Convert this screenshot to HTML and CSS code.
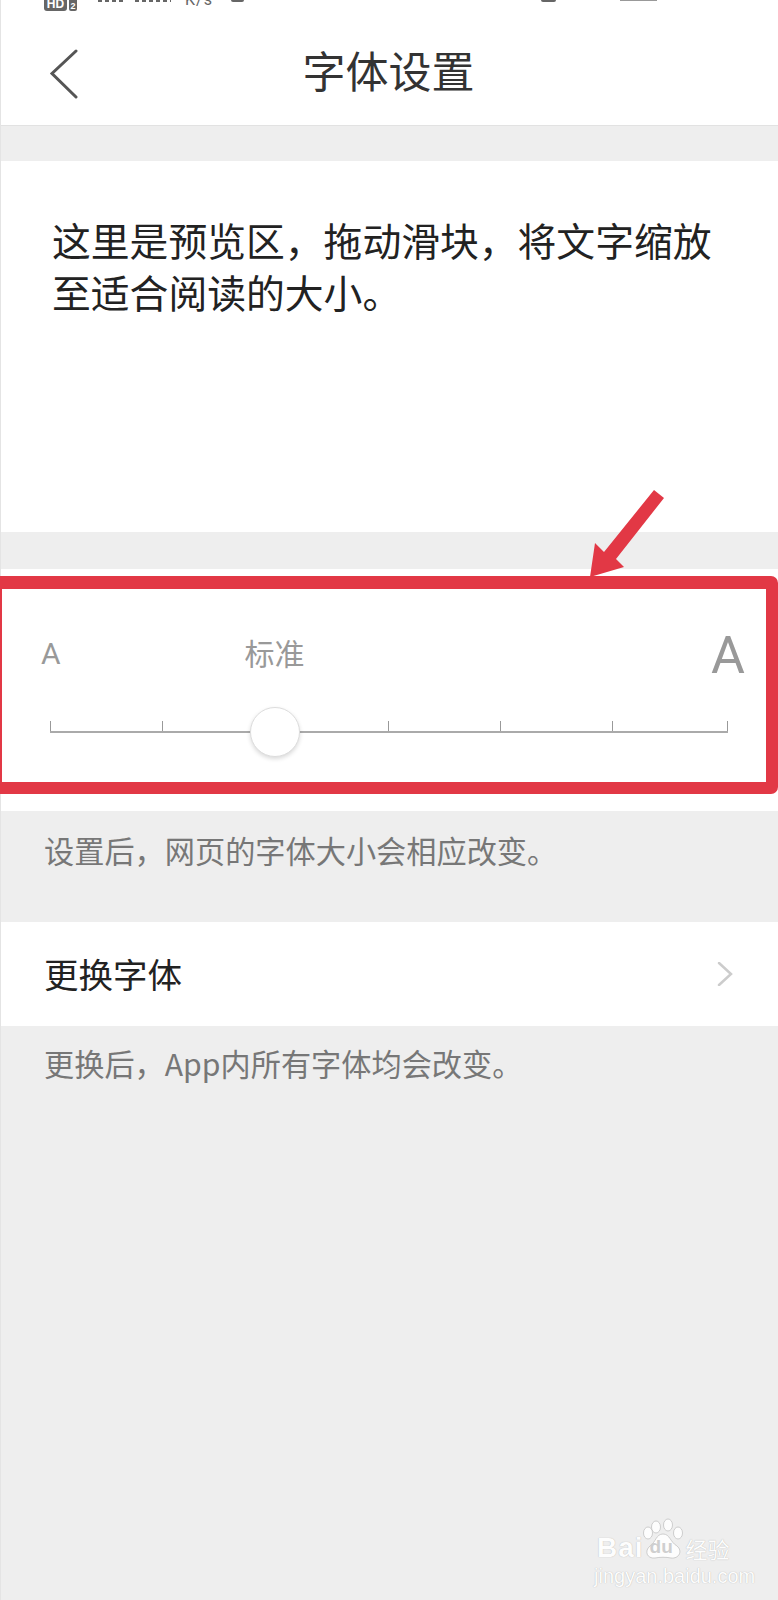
FILE: index.html
```html
<!DOCTYPE html>
<html lang="zh-CN">
<head>
<meta charset="utf-8">
<title>字体设置</title>
<link rel="stylesheet" href="styles.css">
</head>
<body>
<div class="page">
  <header class="top">
    <div class="status">
      <span class="hd">HD</span>
      <span class="sim">2</span>
      <span class="dots dots-a"></span>
      <span class="dots dots-b"></span>
      <span class="speed">K/s</span>
      <span class="cap cap-a"></span>
      <span class="cap cap-b"></span>
      <span class="batt"></span>
    </div>
    <div class="nav">
      <svg class="back" viewBox="0 0 30 50" width="30" height="50"><path d="M27 2 L3 24.5 L27 48"/></svg>
      <h1 class="title">字体设置</h1>
    </div>
  </header>

  <section class="preview">
    <p class="preview-text">这里是预览区，拖动滑块，将文字缩放至适合阅读的大小。</p>
  </section>

  <section class="slider">
    <div class="labels">
      <span class="a-small">A</span>
      <span class="std">标准</span>
      <span class="a-large">A</span>
    </div>
    <div class="track">
      <i class="seg"></i><i class="seg"></i><i class="seg"></i><i class="seg"></i><i class="seg"></i><i class="seg last"></i>
      <span class="thumb"></span>
    </div>
  </section>

  <p class="note note-first">设置后，网页的字体大小会相应改变。</p>

  <div class="row">
    <span class="row-label">更换字体</span>
    <svg class="chev" viewBox="0 0 16 24" width="16" height="24"><path d="M2 1 L14 12 L2 23"/></svg>
  </div>

  <p class="note note-second">更换后，App内所有字体均会改变。</p>

  <div class="mark-box"></div>
  <svg class="mark-arrow" viewBox="0 0 90 100" width="90" height="100"><polygon points="70,2 80,10 32,71 40,79 6,89 11,55 20,64"/></svg>

  <div class="wm">
    <div class="wm-line">
      <span class="wm-bai">Bai</span>
      <span class="wm-paw">
        <svg viewBox="0 0 44 42" width="44" height="42">
          <ellipse cx="14" cy="9" rx="4.5" ry="6"/>
          <ellipse cx="26" cy="7" rx="4.5" ry="6"/>
          <ellipse cx="36" cy="15" rx="4.5" ry="6"/>
          <ellipse cx="6" cy="15" rx="4.5" ry="6"/>
          <path d="M21 16 C28 16 28 24 35 28 C41 33 37 41 29 40 C24 39 18 39 13 40 C5 41 2 33 8 28 C14 24 14 16 21 16 Z"/>
        </svg>
        <span class="wm-du">du</span>
      </span>
      <span class="wm-jy">经验</span>
    </div>
    <div class="wm-url">jingyan.baidu.com</div>
  </div>
</div>
</body>
</html>
```
FILE: styles.css
```css
* { box-sizing: border-box; }
html, body { margin: 0; padding: 0; }
html { overflow: hidden; }
body {
  font-family: "Noto Sans CJK SC", "Noto Sans", sans-serif;
  background: #eeeeee;
}
.page {
  position: relative;
  width: 778px;
  height: 1600px;
  background: #eeeeee;
  border-left: 1px solid #e4e4e4;
}

/* header */
.top {
  height: 126px;
  background: #fff;
  border-bottom: 1px solid #e2e2e2;
}
.status {
  height: 12px;
  overflow: hidden;
  display: flex;
  align-items: flex-start;
  color: #666;
}
.hd {
  width: 23px;
  height: 11px;
  margin-left: 43px;
  background: #666;
  border-radius: 0 0 3px 3px;
  color: #fff;
  font: 700 12px/8px "Liberation Sans", sans-serif;
  text-align: center;
}
.sim {
  width: 8px;
  height: 11px;
  margin-left: 2px;
  background: #666;
  border-radius: 0 0 2px 2px;
  color: #fff;
  font: 700 9px/12px "Liberation Sans", sans-serif;
  text-align: center;
}
.dots {
  height: 2px;
  background: repeating-linear-gradient(90deg, #666 0 4px, transparent 4px 7px);
}
.dots-a { width: 26px; margin-left: 21px; }
.dots-b { width: 36px; margin-left: 11px; }
.speed {
  margin-left: 14px;
  margin-top: -8px;
  font: 400 16px/16px "Roboto", sans-serif;
  letter-spacing: 1px;
}
.cap {
  width: 13px;
  height: 2px;
  background: #666;
  border-radius: 0 0 7px 7px;
}
.cap-a { margin-left: 18px; }
.cap-b { margin-left: 297px; width: 15px; }
.batt {
  width: 37px;
  height: 1px;
  margin-left: 64px;
  background: #999;
}
.nav {
  position: relative;
  height: 113px;
  display: flex;
  align-items: center;
  justify-content: center;
}
.back {
  position: absolute;
  left: 48px;
  top: 37px;
  fill: none;
  stroke: #555;
  stroke-width: 3;
  stroke-linecap: round;
}
.title {
  margin: 0 0 0 -2px;
  font-size: 43px;
  line-height: 60px;
  font-weight: 400;
  color: #333;
}

/* preview */
.preview {
  margin-top: 35px;
  height: 371px;
  padding: 52px 50px 0 51px;
  background: #fff;
}
.preview-text {
  margin: 0;
  font-size: 38.8px;
  line-height: 52px;
  color: #222;
}

/* slider */
.slider {
  margin-top: 37px;
  height: 242px;
  padding-top: 60px;
  background: #fff;
}
.labels {
  display: flex;
  align-items: flex-start;
  height: 92px;
  padding-left: 40px;
  color: #999;
}
.a-small {
  font: 400 30px/40px "Roboto", sans-serif;
  margin-top: 5px;
}
.std {
  margin-left: 184px;
  font-size: 30px;
  line-height: 40px;
  margin-top: 3px;
}
.a-large {
  margin-left: auto;
  margin-right: 33px;
  font: 400 52px/60px "Roboto", sans-serif;
  margin-top: -3px;
}
.track {
  position: relative;
  display: grid;
  grid-template-columns: 112px 113px 113px 112px 112px 116px;
  margin-left: 49px;
  width: 678px;
  height: 12px;
  border-bottom: 2px solid #aaa;
}
.seg { border-left: 1px solid #999; }
.last { border-right: 1px solid #999; }
.thumb {
  position: absolute;
  left: 200px;
  top: -14px;
  width: 50px;
  height: 50px;
  border-radius: 50%;
  background: #fff;
  border: 1px solid #ddd;
  box-shadow: 0 2px 4px rgba(0,0,0,.15);
}

/* notes */
.note {
  margin: 0;
  padding-left: 43px;
  font-size: 30.2px;
  color: #777;
}
.note-first {
  height: 111px;
  padding-top: 17px;
  line-height: 44px;
}
.note-second {
  padding-top: 15px;
  line-height: 44px;
}

/* row */
.row {
  height: 104px;
  padding: 0 45px 0 43px;
  background: #fff;
  display: flex;
  align-items: center;
  justify-content: space-between;
}
.row-label {
  font-size: 34.5px;
  line-height: 50px;
  margin-top: -3px;
  color: #222;
}
.chev {
  fill: none;
  stroke: #ccc;
  stroke-width: 2.5;
  stroke-linecap: round;
}

/* annotation overlay */
.mark-box {
  position: absolute;
  left: -11px;
  top: 576px;
  width: 788px;
  height: 218px;
  border: 12px solid #e23845;
  border-top-width: 13px;
  border-radius: 7px;
}
.mark-arrow {
  position: absolute;
  left: 583px;
  top: 488px;
  fill: #e23845;
}

/* watermark */
.wm {
  position: absolute;
  left: 593px;
  top: 1516px;
  width: 144px;
  color: #fdfdfd;
  text-shadow: 0 0 1px #aaa;
}
.wm-line {
  display: flex;
  align-items: flex-end;
  height: 44px;
}
.wm-bai {
  font: 700 28px/24px "Liberation Sans", sans-serif;
  letter-spacing: 1px;
  margin-left: 3px;
}
.wm-paw {
  position: relative;
  width: 44px;
  height: 42px;
  margin-left: -2px;
}
.wm-paw svg {
  fill: #fdfdfd;
  stroke: #bbb;
  stroke-width: .7;
}
.wm-du {
  position: absolute;
  left: 8px;
  top: 19px;
  font: 700 19px/20px "Liberation Sans", sans-serif;
  color: #cfcfcf;
  text-shadow: none;
}
.wm-jy {
  font-size: 22px;
  line-height: 24px;
}
.wm-url {
  margin-top: 5px;
  font: 400 20px/22px "Liberation Sans", sans-serif;
  white-space: nowrap;
}
```
